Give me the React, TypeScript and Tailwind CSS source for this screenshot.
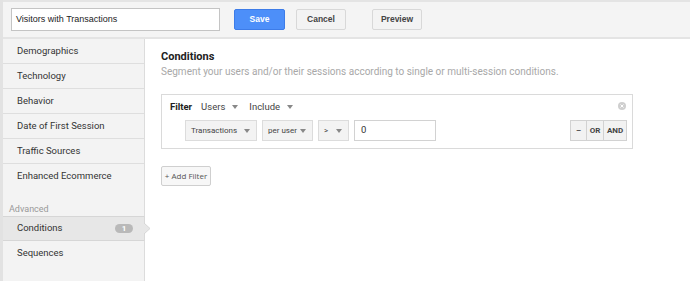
import React from "react";

const Caret = () => (
  <svg width="6" height="4" viewBox="0 0 6 4" className="inline-block shrink-0">
    <path d="M0 0 L6 0 L3 4 Z" fill="#888" />
  </svg>
);

const navTop = ["Demographics", "Technology", "Behavior", "Date of First Session", "Traffic Sources", "Enhanced Ecommerce"];

export default function App() {
  return (
    <div className="w-[690px] h-[281px] overflow-hidden bg-white flex flex-col border-l-[3px] border-[#e2e2e2]" style={{ fontFamily: "Roboto, 'Liberation Sans', Arial, sans-serif" }}>
      {/* top bar */}
      <div className="h-[39px] shrink-0 bg-[#f4f4f4] border-t-[2px] border-b-[2px] border-[#e4e4e4] flex items-center pl-[8px]">
        <div className="w-[209px] h-[23px] bg-white border border-[#c4c4c4] flex items-center pl-[4px] text-[9px] text-[#222]" style={{ fontFamily: "'Liberation Sans', Arial, sans-serif" }}>
          Visitors with Transactions
        </div>
        <button className="ml-[14px] w-[51px] h-[21px] rounded-[2px] bg-[#4d8ff9] border border-[#3d7ce8] text-white text-[8.5px] font-bold" style={{ fontFamily: "'Liberation Sans', Arial, sans-serif" }}>Save</button>
        <button className="ml-[11px] w-[50px] h-[21px] rounded-[2px] bg-[#f3f3f3] border border-[#d8d8d8] text-[#444] text-[8.5px] font-bold" style={{ fontFamily: "'Liberation Sans', Arial, sans-serif" }}>Cancel</button>
        <button className="ml-[26px] w-[50px] h-[21px] rounded-[2px] bg-[#f3f3f3] border border-[#d8d8d8] text-[#444] text-[8.5px] font-bold" style={{ fontFamily: "'Liberation Sans', Arial, sans-serif" }}>Preview</button>
      </div>

      <div className="flex flex-1 min-h-0">
        {/* sidebar */}
        <div className="w-[142px] shrink-0 bg-[#f3f3f3] border-r border-[#dcdcdc] flex flex-col relative">
          {navTop.map((t, i) => (
            <div key={t} className={`h-[25px] flex items-center pl-[14px] text-[9.5px] text-[#333] ${i < navTop.length - 1 ? "border-b border-[#dedede]" : ""}`}>
              {t}
            </div>
          ))}
          <div className="mt-[15px] h-[12px] pl-[6px] text-[9px] text-[#999] flex items-center">Advanced</div>
          <div className="h-[25px] flex items-center pl-[14px] pr-[11px] text-[9.5px] text-[#333] bg-[#e7e7e7] border-y border-[#d6d6d6] relative">
            <span className="flex-1">Conditions</span>
            <span className="w-[18px] h-[9px] rounded-full bg-[#b9b9b9] text-white text-[8px] font-bold flex items-center justify-center leading-none">1</span>
            <svg className="absolute right-[-8px] top-[-1px]" width="8" height="25" viewBox="0 0 8 25">
              <path d="M0 0 L0 7 L6 12.5 L0 18 L0 25" fill="#e7e7e7" stroke="#d6d6d6" strokeWidth="1" />
            </svg>
          </div>
          <div className="h-[25px] flex items-center pl-[14px] text-[9.5px] text-[#333]">Sequences</div>
        </div>

        {/* content */}
        <div className="flex-1 pl-[16px] pt-[11px]">
          <div className="text-[11px] font-bold text-[#222] leading-[14px]">Conditions</div>
          <div className="text-[10px] text-[#a8a8a8] leading-[13px] mt-[1px] whitespace-nowrap">
            Segment your users and/or their sessions according to single or multi-session conditions.
          </div>

          <div className="mt-[16px] w-[472px] h-[55px] border border-[#dadada] relative">
            <div className="flex items-center h-[22px] pl-[8px] pt-[2px] text-[9.5px]">
              <span className="font-bold text-[#222]">Filter</span>
              <span className="ml-[9px] text-[#444]">Users</span>
              <span className="ml-[7px] flex items-center"><Caret /></span>
              <span className="ml-[11px] text-[#444]">Include</span>
              <span className="ml-[7px] flex items-center"><Caret /></span>
            </div>
            <svg className="absolute right-[6px] top-[7px]" width="8" height="8" viewBox="0 0 8 8">
              <circle cx="4" cy="4" r="4" fill="#cfcfcf" />
              <path d="M2.5 2.5 L5.5 5.5 M5.5 2.5 L2.5 5.5" stroke="#fff" strokeWidth="1" />
            </svg>
            <div className="flex items-center pl-[23px] mt-[3px] text-[8px] text-[#444] whitespace-nowrap">
              <div className="w-[72px] h-[21px] bg-[#f3f3f3] border border-[#dcdcdc] flex items-center pl-[5px] pr-[6px] justify-between">
                <span>Transactions</span><Caret />
              </div>
              <div className="ml-[5px] w-[51px] h-[21px] bg-[#f3f3f3] border border-[#dcdcdc] flex items-center pl-[5px] pr-[6px] justify-between">
                <span>per user</span><Caret />
              </div>
              <div className="ml-[5px] w-[31px] h-[21px] bg-[#f3f3f3] border border-[#dcdcdc] flex items-center pl-[5px] pr-[6px] justify-between">
                <span>&gt;</span><Caret />
              </div>
              <div className="ml-[5px] w-[82px] h-[21px] bg-white border border-[#d2d2d2] flex items-center pl-[6px] text-[9.5px] text-[#333]">0</div>
              <div className="ml-auto mr-[5px] flex h-[21px] border border-[#d2d2d2] bg-[#f2f2f2] text-[8px] font-bold text-[#444]">
                <div className="w-[16px] flex items-center justify-center border-r border-[#d2d2d2]">–</div>
                <div className="w-[17px] flex items-center justify-center border-r border-[#d2d2d2]">OR</div>
                <div className="w-[22px] flex items-center justify-center">AND</div>
              </div>
            </div>
          </div>

          <button className="mt-[17px] w-[50px] h-[20px] rounded-[2px] bg-[#f7f7f7] border border-[#cfcfcf] text-[8px] text-[#555] flex items-center justify-center whitespace-nowrap" style={{ fontFamily: "'Open Sans', sans-serif" }}>
            + Add Filter
          </button>
        </div>
      </div>
    </div>
  );
}
